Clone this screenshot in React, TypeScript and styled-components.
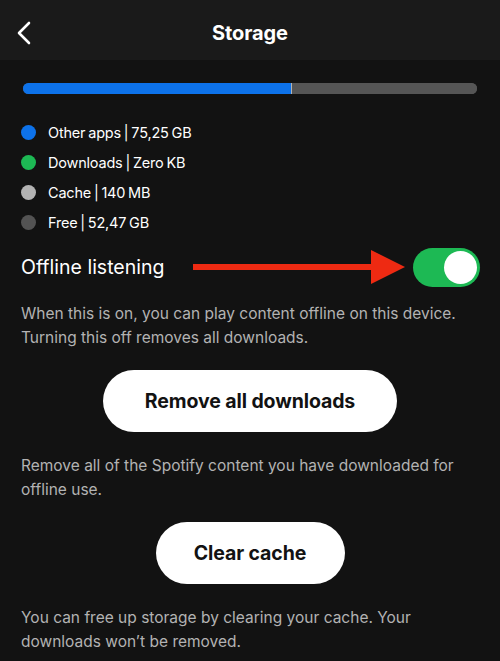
import React, { useState } from "react";
import styled, { createGlobalStyle } from "styled-components";

const GlobalStyle = createGlobalStyle`
  html, body {
    margin: 0;
    padding: 0;
    background: #121212;
  }
  body {
    font-family: Inter, "Noto Sans", sans-serif;
    color: #fff;
    -webkit-font-smoothing: antialiased;
  }
`;

const segments = [
  { label: "Other apps | 75,25 GB", color: "#0d72ea", share: 59.1 },
  { label: "Downloads | Zero KB", color: "#1db954", share: 0 },
  { label: "Cache | 140 MB", color: "#b3b3b3", share: 0.2 },
  { label: "Free | 52,47 GB", color: "#535353", share: 0 },
];

const Page = styled.div`
  width: 500px;
  height: 661px;
  overflow: hidden;
  background: #121212;
`;

const Header = styled.header`
  height: 60px;
  background: #1a1a1a;
  display: grid;
  grid-template-columns: 60px 1fr 60px;
  align-items: center;
  padding-top: 6px;
  box-sizing: border-box;
`;

const BackButton = styled.button`
  background: none;
  border: none;
  padding: 0 0 0 16px;
  display: flex;
  align-items: center;
  color: #fff;
  cursor: pointer;
`;

const Title = styled.h1`
  margin: 0;
  text-align: center;
  font-size: 20px;
  font-weight: 700;
  letter-spacing: -0.1px;
`;

const Content = styled.main`
  padding: 23px 21px 0 21px;
`;

const Bar = styled.div`
  height: 11px;
  margin: 0 2px;
  border-radius: 6px;
  background: #555;
  display: flex;
  overflow: hidden;
`;

const BarPart = styled.div<{ $color: string }>`
  background: ${(p) => p.$color};
  height: 100%;
`;

const Legend = styled.ul`
  list-style: none;
  margin: 29px 0 0 0;
  padding: 0;
  display: flex;
  flex-direction: column;
  gap: 12px;
`;

const LegendRow = styled.li`
  display: flex;
  align-items: center;
  gap: 12px;
  height: 18px;
  font-size: 14.5px;
  letter-spacing: -0.2px;
  word-spacing: -1px;
  color: #fff;
`;

const Dot = styled.span<{ $color: string }>`
  width: 15px;
  height: 15px;
  border-radius: 50%;
  background: ${(p) => p.$color};
  flex-shrink: 0;
`;

const ToggleRow = styled.div`
  margin-top: 16px;
  display: flex;
  align-items: center;
  position: relative;
  height: 40px;
`;

const ToggleLabel = styled.span`
  font-size: 19.5px;
  font-weight: 400;
  flex: 1;
`;

const Arrow = styled.svg`
  position: absolute;
  left: 172px;
  top: 3px;
`;

const Switch = styled.button<{ $on: boolean }>`
  width: 67px;
  height: 39px;
  border-radius: 20px;
  border: none;
  padding: 3px;
  margin-right: -1px;
  background: ${(p) => (p.$on ? "#1db954" : "#535353")};
  display: flex;
  justify-content: ${(p) => (p.$on ? "flex-end" : "flex-start")};
  align-items: center;
  cursor: pointer;
`;

const Knob = styled.span`
  width: 33px;
  height: 33px;
  border-radius: 50%;
  background: #fff;
`;

const Description = styled.p<{ $top?: number }>`
  margin: ${(p) => p.$top ?? 0}px 0 0 0;
  font-size: 15.5px;
  line-height: 23.5px;
  color: #b3b3b3;
`;

const ButtonRow = styled.div`
  display: flex;
  justify-content: center;
  margin: 21px 0 22px 0;
`;

const PillButton = styled.button<{ $width: number }>`
  width: ${(p) => p.$width}px;
  height: 62px;
  border-radius: 31px;
  border: none;
  background: #fff;
  color: #121212;
  font-family: Inter, "Noto Sans", sans-serif;
  font-size: 19.5px;
  font-weight: 700;
  letter-spacing: -0.1px;
  cursor: pointer;
`;

const ChevronLeft = () => (
  <svg width="16" height="24" viewBox="0 0 16 24" fill="none">
    <path d="M13 2 L3 12 L13 22" stroke="#fff" strokeWidth="2.6" strokeLinecap="round" strokeLinejoin="round" />
  </svg>
);

export default function App() {
  const [offline, setOffline] = useState(true);
  const used = segments.reduce((s, x) => s + x.share, 0);

  return (
    <Page>
      <GlobalStyle />
      <Header>
        <BackButton aria-label="Back">
          <ChevronLeft />
        </BackButton>
        <Title>Storage</Title>
        <span />
      </Header>
      <Content>
        <Bar>
          {segments.map((s) => (
            <BarPart key={s.label} $color={s.color} style={{ width: `${s.share}%` }} />
          ))}
          <BarPart $color="#555" style={{ width: `${100 - used}%` }} />
        </Bar>
        <Legend>
          {segments.map((s) => (
            <LegendRow key={s.label}>
              <Dot $color={s.color} />
              {s.label}
            </LegendRow>
          ))}
        </Legend>
        <ToggleRow>
          <ToggleLabel>Offline listening</ToggleLabel>
          <Arrow width="212" height="34" viewBox="0 0 212 34">
            <rect x="0" y="14" width="182" height="6" fill="#ee2a12" />
            <polygon points="178,0 212,17 178,34" fill="#ee2a12" />
          </Arrow>
          <Switch $on={offline} onClick={() => setOffline(!offline)} aria-label="Offline listening">
            <Knob />
          </Switch>
        </ToggleRow>
        <Description $top={15}>
          When this is on, you can play content offline on this device. Turning this off removes all downloads.
        </Description>
        <ButtonRow>
          <PillButton $width={294}>Remove all downloads</PillButton>
        </ButtonRow>
        <Description>
          Remove all of the Spotify content you have downloaded for offline use.
        </Description>
        <ButtonRow>
          <PillButton $width={189}>Clear cache</PillButton>
        </ButtonRow>
        <Description>
          You can free up storage by clearing your cache. Your downloads won’t be removed.
        </Description>
      </Content>
    </Page>
  );
}
